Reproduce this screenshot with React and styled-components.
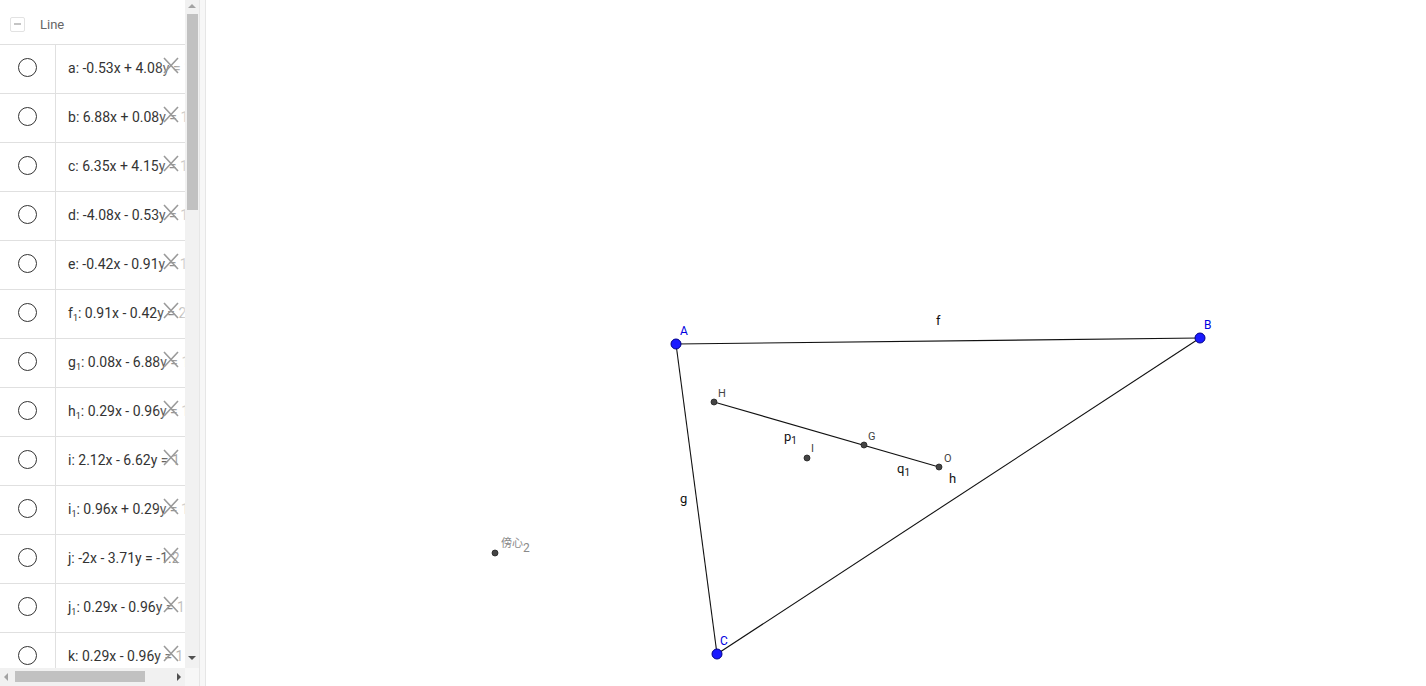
import React from "react";
import styled, { createGlobalStyle } from "styled-components";

const Global = createGlobalStyle`
  html, body { margin: 0; padding: 0; overflow: hidden; background: #fff; }
  body { font-family: Roboto, "Noto Sans", "Liberation Sans", sans-serif; }
`;

const Page = styled.div`
  display: flex;
  width: 1426px;
  height: 686px;
  overflow: hidden;
`;

const LeftPanel = styled.div`
  display: grid;
  grid-template-columns: 185px 14px;
  grid-template-rows: 1fr 18px;
  width: 199px;
  height: 100%;
  flex: none;
`;

const ListArea = styled.div`
  overflow: hidden;
  display: flex;
  flex-direction: column;
`;

const Header = styled.div`
  display: flex;
  align-items: center;
  gap: 15px;
  height: 40px;
  padding: 4px 0 0 10px;
  border-bottom: 1px solid #e0e0e0;
  flex: none;
`;

const CollapseBox = styled.div`
  width: 13px;
  height: 13px;
  border: 1px solid #e2e2e2;
  border-radius: 2px;
  display: flex;
  align-items: center;
  justify-content: center;
  &::after {
    content: "";
    width: 7px;
    height: 1.5px;
    background: #c4c4c4;
  }
`;

const HeaderLabel = styled.span`
  font-size: 13px;
  color: #666;
`;

const Row = styled.div`
  display: flex;
  height: 48px;
  border-bottom: 1px solid #e0e0e0;
  flex: none;
`;

const MarbleCell = styled.div`
  width: 56px;
  flex: none;
  display: flex;
  align-items: center;
  justify-content: center;
  border-right: 1px solid #e0e0e0;
  padding-bottom: 3px;
  box-sizing: border-box;
`;

const Marble = styled.div`
  width: 17px;
  height: 17px;
  border: 1.5px solid #333;
  border-radius: 50%;
`;

const ExprCell = styled.div`
  position: relative;
  flex: 1;
  overflow: hidden;
  display: flex;
  align-items: center;
  padding-left: 12px;
  padding-bottom: 3px;
  white-space: nowrap;
  font-size: 14px;
  color: #333;
  &::after {
    content: "";
    position: absolute;
    top: 0;
    bottom: 0;
    right: 0;
    width: 30px;
    background: linear-gradient(to right, rgba(255,255,255,0), rgba(255,255,255,0.8));
  }
`;

const Sub = styled.sub`
  font-size: 9px;
  vertical-align: -3px;
  line-height: 0;
`;

const DeleteIcon = styled.svg`
  position: absolute;
  right: 6px;
  top: 12px;
  z-index: 1;
`;

const VScroll = styled.div`
  background: #f1f1f1;
  position: relative;
`;

const VThumb = styled.div`
  position: absolute;
  left: 2px;
  right: 1px;
  top: 14px;
  height: 196px;
  background: #c1c1c1;
`;

const Arrow = styled.div`
  position: absolute;
  width: 0;
  height: 0;
  border: 4px solid transparent;
  ${(p) => p.dir === "up" && `top: 4px; left: 3px; border-bottom: 4px solid #a3a3a3; border-top: none;`}
  ${(p) => p.dir === "down" && `bottom: 8px; left: 3px; border-top: 4px solid #505050; border-bottom: none;`}
  ${(p) => p.dir === "left" && `left: 4px; top: 5px; border-right: 4px solid #a3a3a3; border-left: none;`}
  ${(p) => p.dir === "right" && `right: 4px; top: 5px; border-left: 4px solid #505050; border-right: none;`}
`;

const HScroll = styled.div`
  background: #f1f1f1;
  position: relative;
`;

const HThumb = styled.div`
  position: absolute;
  left: 15px;
  width: 130px;
  top: 3px;
  height: 11px;
  background: #c1c1c1;
`;

const Corner = styled.div`
  background: #f7f7f7;
`;

const Splitter = styled.div`
  width: 5px;
  flex: none;
  background: #f7f7f7;
  border-left: 1px solid #e6e6e6;
  border-right: 1px solid #e6e6e6;
`;

const Canvas = styled.div`
  flex: 1;
  height: 100%;
  background: #fff;
`;

const rows = [
  { n: "a", e: "-0.53x + 4.08y = 1" },
  { n: "b", e: "6.88x + 0.08y = 1" },
  { n: "c", e: "6.35x + 4.15y = 1" },
  { n: "d", e: "-4.08x - 0.53y = 1" },
  { n: "e", e: "-0.42x - 0.91y = 1" },
  { n: "f", s: "1", e: "0.91x - 0.42y = 2" },
  { n: "g", s: "1", e: "0.08x - 6.88y = 1" },
  { n: "h", s: "1", e: "0.29x - 0.96y = 1" },
  { n: "i", e: "2.12x - 6.62y = 1" },
  { n: "i", s: "1", e: "0.96x + 0.29y = 1" },
  { n: "j", e: "-2x - 3.71y = -1.2" },
  { n: "j", s: "1", e: "0.29x - 0.96y = 1" },
  { n: "k", e: "0.29x - 0.96y = 1" },
];

function AlgebraRow({ r }) {
  return (
    <Row>
      <MarbleCell>
        <Marble />
      </MarbleCell>
      <ExprCell>
        <span>
          {r.n}
          {r.s && <Sub>{r.s}</Sub>}: {r.e}
        </span>
        <DeleteIcon width="16" height="17" viewBox="0 0 16 17">
          <path d="M1 1 L15 16 M15 1 L1 16" stroke="#9a9a9a" strokeWidth="1.6" fill="none" />
        </DeleteIcon>
      </ExprCell>
    </Row>
  );
}

const pts = {
  A: [676, 344],
  B: [1200, 338],
  C: [717, 654],
  H: [714, 402],
  G: [864, 445],
  O: [939, 467],
  I: [807, 458],
  P: [495, 553],
};

function Drawing() {
  const font = "Roboto, 'Liberation Sans', sans-serif";
  return (
    <svg width="1220" height="686" viewBox="206 0 1220 686" style={{ display: "block" }}>
      <g stroke="#111" strokeWidth="1.1" fill="none">
        <line x1={pts.A[0]} y1={pts.A[1]} x2={pts.B[0]} y2={pts.B[1]} />
        <line x1={pts.A[0]} y1={pts.A[1]} x2={pts.C[0]} y2={pts.C[1]} />
        <line x1={pts.B[0]} y1={pts.B[1]} x2={pts.C[0]} y2={pts.C[1]} />
        <line x1={pts.H[0]} y1={pts.H[1]} x2={pts.O[0]} y2={pts.O[1]} />
      </g>
      {["H", "G", "O", "I", "P"].map((k) => (
        <circle key={k} cx={pts[k][0]} cy={pts[k][1]} r="3" fill="#444" stroke="#222" strokeWidth="0.8" />
      ))}
      {["A", "B", "C"].map((k) => (
        <circle key={k} cx={pts[k][0]} cy={pts[k][1]} r="5" fill="#1a1aff" stroke="#00008a" strokeWidth="1" />
      ))}
      <g fontFamily={font} fontSize="12" fill="#0000e0">
        <text x="680" y="335">A</text>
        <text x="1204" y="329">B</text>
        <text x="720" y="645">C</text>
      </g>
      <g fontFamily={font} fontSize="13" fill="#111">
        <text x="936" y="325">f</text>
        <text x="680" y="503">g</text>
        <text x="949" y="483">h</text>
        <text x="784" y="441">
          p<tspan fontSize="10" dy="3">1</tspan>
        </text>
        <text x="897" y="473">
          q<tspan fontSize="10" dy="3">1</tspan>
        </text>
      </g>
      <g fontFamily={font} fontSize="11" fill="#444">
        <text x="718" y="397">H</text>
        <text x="868" y="440">G</text>
        <text x="944" y="462">O</text>
        <text x="811" y="452">I</text>
      </g>
      <g fill="#8a8a8a">
        <text x="501" y="547" fontSize="11" fontFamily="'Noto Sans CJK SC', sans-serif">傍心</text>
        <text x="523" y="552" fontSize="12" fontFamily={font}>2</text>
      </g>
    </svg>
  );
}

export default function App() {
  return (
    <>
      <Global />
      <Page>
        <LeftPanel>
          <ListArea>
            <Header>
              <CollapseBox />
              <HeaderLabel>Line</HeaderLabel>
            </Header>
            {rows.map((r, i) => (
              <AlgebraRow key={i} r={r} />
            ))}
          </ListArea>
          <VScroll>
            <Arrow dir="up" />
            <VThumb />
            <Arrow dir="down" />
          </VScroll>
          <HScroll>
            <Arrow dir="left" />
            <HThumb />
            <Arrow dir="right" />
          </HScroll>
          <Corner />
        </LeftPanel>
        <Splitter />
        <Canvas>
          <Drawing />
        </Canvas>
      </Page>
    </>
  );
}
